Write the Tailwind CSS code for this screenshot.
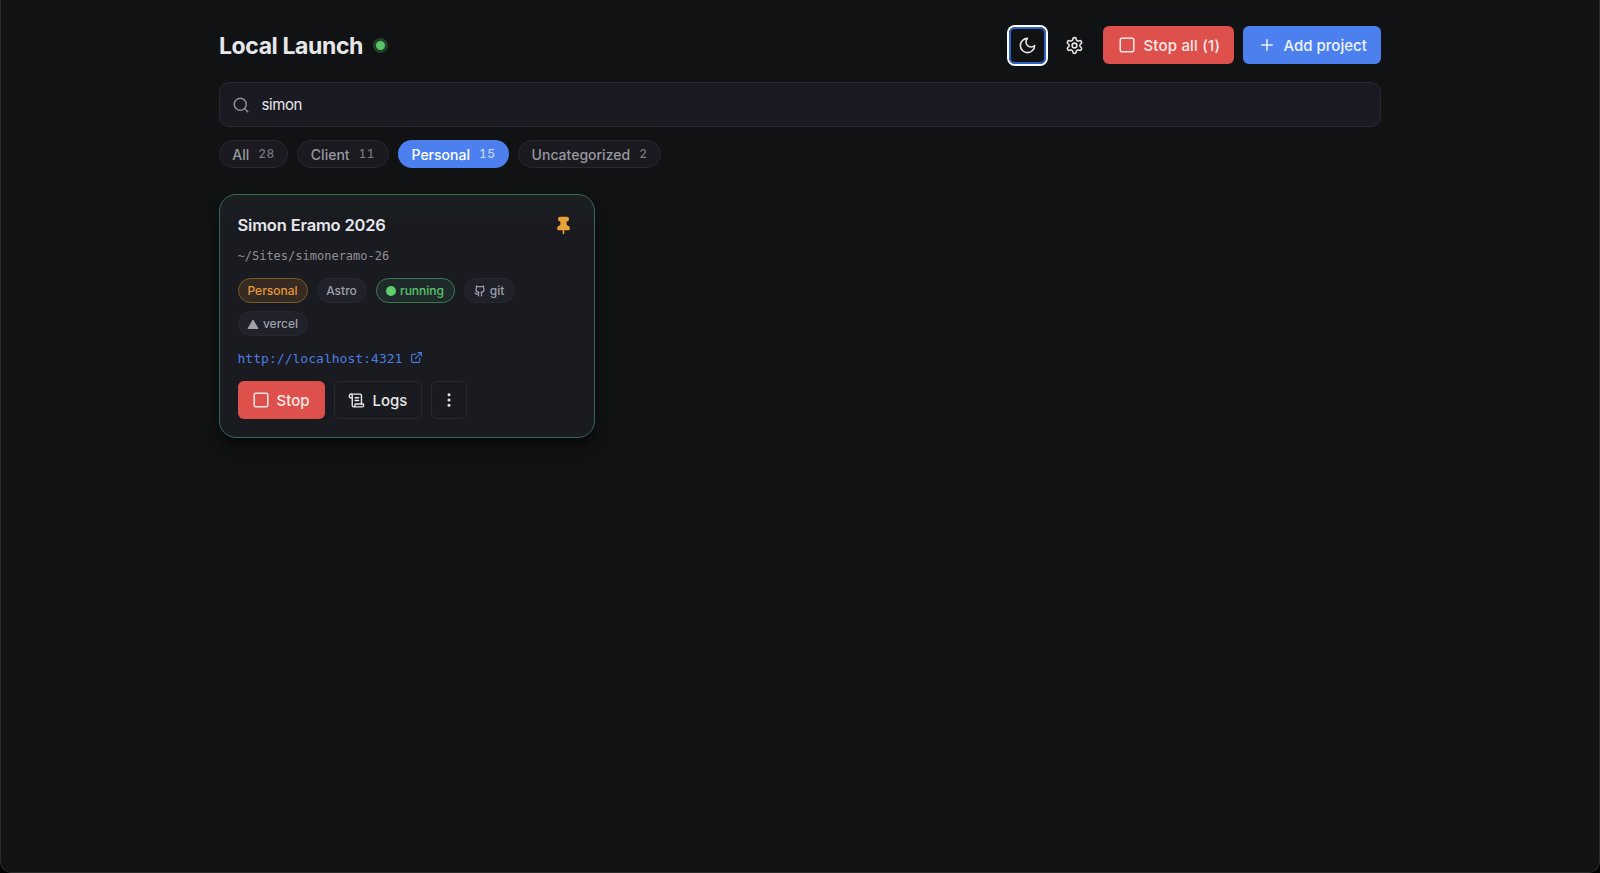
<!DOCTYPE html>
<html lang="en">
	<head>
		<meta charset="UTF-8" />
		<meta name="viewport" content="width=device-width, initial-scale=1.0" />
		<title>Local Launch</title>
		<script src="https://cdn.jsdelivr.net/npm/@tailwindcss/browser@4"></script>
	</head>
	<body class="bg-black">
		<svg class="hidden" xmlns="http://www.w3.org/2000/svg">
			<symbol id="square" viewBox="0 0 24 24">
				<rect x="3" y="3" width="18" height="18" rx="2" />
			</symbol>
		</svg>
		<div
			class="h-screen overflow-hidden rounded-b-xl border border-t-0 border-[#2b2c2e] bg-[#111214] font-['Inter',sans-serif] text-[#e6e7ea]"
		>
			<div class="mx-auto w-[1162px] pt-[26px]">
				<header class="flex h-[38px] items-center justify-between">
					<div class="flex items-center gap-[13px]">
						<h1 class="pt-[2px] text-[23px] leading-none font-[650] tracking-[-0.4px]">Local Launch</h1>
						<span class="size-[9px] rounded-full bg-[#5bc466] ring-3 ring-[#5bc466]/25"></span>
					</div>
					<div class="flex items-center gap-[9px]">
						<button
							type="button"
							aria-label="Toggle theme"
							class="flex size-[37px] items-center justify-center rounded-[6px] border-2 border-[#2c63c4] ring-2 ring-white"
						>
							<svg class="size-[19px] shrink-0" viewBox="0 0 24 24" fill="none" stroke="currentColor" stroke-width="2" stroke-linecap="round" stroke-linejoin="round">
								<path d="M12 3a6 6 0 0 0 9 9 9 9 0 1 1-9-9Z" />
							</svg>
						</button>
						<button type="button" aria-label="Settings" class="flex h-[38px] w-[39px] items-center justify-center">
							<svg class="size-[19px]" viewBox="0 0 24 24" fill="none" stroke="currentColor" stroke-width="2" stroke-linecap="round" stroke-linejoin="round">
								<path
									d="M12.22 2h-.44a2 2 0 0 0-2 2v.18a2 2 0 0 1-1 1.73l-.43.25a2 2 0 0 1-2 0l-.15-.08a2 2 0 0 0-2.73.73l-.22.38a2 2 0 0 0 .73 2.73l.15.1a2 2 0 0 1 1 1.72v.51a2 2 0 0 1-1 1.74l-.15.09a2 2 0 0 0-.73 2.73l.22.38a2 2 0 0 0 2.73.73l.15-.08a2 2 0 0 1 2 0l.43.25a2 2 0 0 1 1 1.73V20a2 2 0 0 0 2 2h.44a2 2 0 0 0 2-2v-.18a2 2 0 0 1 1-1.73l.43-.25a2 2 0 0 1 2 0l.15.08a2 2 0 0 0 2.73-.73l.22-.39a2 2 0 0 0-.73-2.73l-.15-.08a2 2 0 0 1-1-1.74v-.5a2 2 0 0 1 1-1.74l.15-.09a2 2 0 0 0 .73-2.73l-.22-.38a2 2 0 0 0-2.73-.73l-.15.08a2 2 0 0 1-2 0l-.43-.25a2 2 0 0 1-1-1.73V4a2 2 0 0 0-2-2z"
								/>
								<circle cx="12" cy="12" r="3" />
							</svg>
						</button>
						<button type="button" class="flex h-[38px] w-[131px] items-center gap-[8px] rounded-[6px] bg-[#de504c] pl-[14.5px] text-[15px] font-medium tracking-[0.18px] whitespace-nowrap text-[#fbe9e8]">
							<svg class="size-[18px]" fill="none" stroke="currentColor" stroke-width="2"><use href="#square" /></svg>
							<span class="pt-[2px]">Stop all (1)</span>
						</button>
						<button type="button" class="flex h-[38px] w-[138px] items-center gap-[8px] rounded-[6px] bg-[#4c80ee] pl-[14.5px] text-[15px] font-medium whitespace-nowrap text-[#eef3fe]">
							<svg class="size-[18px]" viewBox="0 0 24 24" fill="none" stroke="currentColor" stroke-width="2" stroke-linecap="round">
								<path d="M5 12h14M12 5v14" />
							</svg>
							<span class="pt-[2px]">Add project</span>
						</button>
					</div>
				</header>

				<label class="mt-[18px] flex h-[45px] items-center gap-[12px] rounded-[10px] border border-[#28292d] bg-[#1a1a22] pl-[11.5px]">
					<svg class="size-[18px] text-[#8d8e95]" viewBox="0 0 24 24" fill="none" stroke="currentColor" stroke-width="2" stroke-linecap="round">
						<circle cx="11" cy="11" r="8" />
						<path d="m21 21-4.3-4.3" />
					</svg>
					<input type="text" value="simon" aria-label="Search" class="flex-1 bg-transparent pt-[1px] text-[15px] tracking-[-0.4px] outline-none" />
				</label>

				<nav class="mt-[13px] flex gap-[9px] text-[14px] font-medium text-[#97989f]">
					<button type="button" class="flex h-[28px] w-[69px] items-center justify-center gap-[9px] rounded-full border border-[#28292d] bg-[#1a1a20]">
						All <span class="text-[12px] tracking-[0.5px] text-[#75767d] tabular-nums">28</span>
					</button>
					<button type="button" class="flex h-[28px] w-[92px] items-center justify-center gap-[9px] rounded-full border border-[#28292d] bg-[#1a1a20]">
						Client <span class="text-[12px] tracking-[0.5px] text-[#75767d] tabular-nums">11</span>
					</button>
					<button type="button" class="flex h-[28px] w-[111px] items-center justify-center gap-[9px] rounded-full bg-[#4c80ee] text-white">
						Personal <span class="text-[12px] tracking-[0.5px] text-[#c5d6fa] tabular-nums">15</span>
					</button>
					<button type="button" class="flex h-[28px] w-[143px] items-center justify-center gap-[9px] rounded-full border border-[#28292d] bg-[#1a1a20]">
						Uncategorized <span class="text-[12px] tracking-[0.5px] text-[#75767d] tabular-nums">2</span>
					</button>
				</nav>

				<article class="mt-[26px] h-[243.5px] w-[376px] rounded-[17px] border border-[#37694f] bg-[#1a1a21] bg-linear-to-b from-[#1a1f22] to-[#1a1a21] to-15% px-[17.5px] shadow-lg shadow-black/50">
					<div class="flex h-[60px] items-center justify-between">
						<h2 class="text-[16.5px] font-semibold tracking-[-0.18px]">Simon Eramo 2026</h2>
						<svg class="mr-[4px] size-[19px] text-[#e9a23b]" viewBox="0 0 24 24" fill="currentColor" stroke="currentColor" stroke-width="2" stroke-linecap="round" stroke-linejoin="round">
							<path d="M12 17v5" />
							<path
								d="M9 10.76a2 2 0 0 1-1.11 1.79l-1.78.9A2 2 0 0 0 5 15.24V16a1 1 0 0 0 1 1h12a1 1 0 0 0 1-1v-.76a2 2 0 0 0-1.11-1.79l-1.78-.9A2 2 0 0 1 15 10.76V7a1 1 0 0 1 1-1 2 2 0 0 0 0-4H8a2 2 0 0 0 0 4 1 1 0 0 1 1 1z"
							/>
						</svg>
					</div>
					<p class="-mt-[8px] h-[18px] font-['DejaVu_Sans_Mono',monospace] text-[12px] leading-[18px] text-[#8f9097]">~/Sites/simoneramo-26</p>
					<div class="mt-[13px] flex flex-wrap gap-x-[9px] gap-y-[8px] text-[12px] font-medium text-[#9fa0aa]">
						<span class="flex h-[25px] w-[70px] items-center justify-center rounded-full border border-[#7a5a27] bg-[#352b22] text-[#e8983a]">Personal</span>
						<span class="flex h-[25px] w-[50px] items-center justify-center rounded-full border border-[#26272f] bg-[#20212a]">Astro</span>
						<span class="flex h-[25px] w-[79px] items-center justify-center gap-[4px] rounded-full border border-[#3c7a50] bg-[#1e2b2a] text-[#5bc46b]">
							<span class="size-[10px] rounded-full bg-[#5fce6b]"></span>running
						</span>
						<span class="flex h-[25px] w-[51px] items-center justify-center gap-[4px] rounded-full border border-[#26272f] bg-[#20212a]">
							<svg class="size-[12px]" viewBox="0 0 24 24" fill="none" stroke="currentColor" stroke-width="2.4" stroke-linecap="round" stroke-linejoin="round">
								<path
									d="M15 22v-4a4.8 4.8 0 0 0-1-3.5c3 0 6-2 6-5.5.08-1.25-.27-2.48-1-3.5.28-1.15.28-2.35 0-3.5 0 0-1 0-3 1.5-2.64-.5-5.36-.5-8 0C6 2 5 2 5 2c-.3 1.15-.3 2.35 0 3.5A5.403 5.403 0 0 0 4 9c0 3.5 3 5.5 6 5.5-.39.49-.68 1.05-.85 1.65-.17.6-.22 1.23-.15 1.85v4"
								/>
								<path d="M9 18c-4.51 2-5-2-7-2" />
							</svg>
							git
						</span>
						<span class="flex h-[25px] w-[70px] items-center justify-center gap-[4px] rounded-full border border-[#26272f] bg-[#20212a]">
							<svg class="size-[12px]" viewBox="0 0 12 12" fill="currentColor" stroke="currentColor" stroke-linejoin="round">
								<path d="M6 2 11 10.5H1z" />
							</svg>
							vercel
						</span>
					</div>
					<a href="#" class="mt-[13px] flex h-[19px] items-center gap-[8px] font-['DejaVu_Sans_Mono',monospace] text-[13.05px] text-[#4a7de0]">
						http://localhost:4321
						<svg class="-mt-[2px] size-[13px]" viewBox="0 0 24 24" fill="none" stroke="currentColor" stroke-width="2" stroke-linecap="round" stroke-linejoin="round">
							<path d="M15 3h6v6M10 14 21 3" />
							<path d="M18 13v6a2 2 0 0 1-2 2H5a2 2 0 0 1-2-2V8a2 2 0 0 1 2-2h6" />
						</svg>
					</a>
					<div class="mt-[13px] flex gap-[9px] text-[15px] font-medium">
						<button type="button" class="flex h-[38px] w-[87px] items-center gap-[7px] rounded-[6px] bg-[#de504c] pl-[14px] text-[#fbe9e8]">
							<svg class="size-[18px]" fill="none" stroke="currentColor" stroke-width="2"><use href="#square" /></svg>
							<span class="pt-[2px]">Stop</span>
						</button>
						<button type="button" class="flex h-[38px] w-[88px] items-center gap-[8px] rounded-[6px] border border-[#292a30] pl-[13px]">
							<svg class="size-[17px]" viewBox="0 0 24 24" fill="none" stroke="currentColor" stroke-width="2" stroke-linecap="round" stroke-linejoin="round">
								<path d="M15 12h-5M15 8h-5M19 17V5a2 2 0 0 0-2-2H4" />
								<path
									d="M8 21h12a2 2 0 0 0 2-2v-1a1 1 0 0 0-1-1H11a1 1 0 0 0-1 1v1a2 2 0 1 1-4 0V5a2 2 0 1 0-4 0v2a1 1 0 0 0 1 1h3"
								/>
							</svg>
							<span class="pt-[2px]">Logs</span>
						</button>
						<button type="button" aria-label="More actions" class="flex h-[38px] w-[36px] items-center justify-center rounded-[6px] border border-[#292a30]">
							<svg class="size-[18px]" viewBox="0 0 24 24" fill="currentColor">
								<circle cx="12" cy="5" r="2" />
								<circle cx="12" cy="12" r="2" />
								<circle cx="12" cy="19" r="2" />
							</svg>
						</button>
					</div>
				</article>
			</div>
		</div>
	</body>
</html>
